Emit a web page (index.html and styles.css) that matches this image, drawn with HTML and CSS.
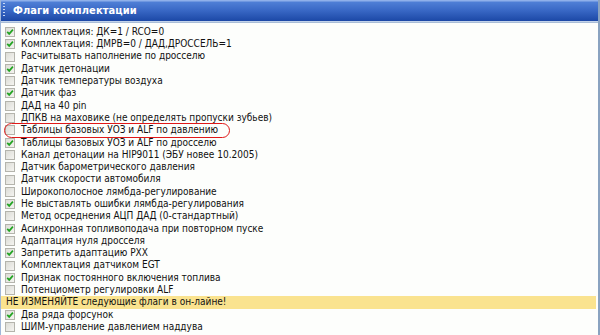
FILE: index.html
```html
<!DOCTYPE html>
<html lang="ru">
<head>
<meta charset="utf-8">
<link rel="stylesheet" href="styles.css">
</head>
<body>
<div class="panel">
  <div class="header">
    <span class="grip"></span>
    <span class="title">Флаги комплектации</span>
  </div>
  <div class="sep"></div>
  <ul class="list">
    <li class="row"><span class="cb on"><svg viewBox="0 0 8 8"><path d="M1.2 3.8 L3.2 5.9 L6.9 1.6"/></svg></span>Комплектация: ДК=1 / RCO=0</li>
    <li class="row"><span class="cb on"><svg viewBox="0 0 8 8"><path d="M1.2 3.8 L3.2 5.9 L6.9 1.6"/></svg></span>Комплектация: ДМРВ=0 / ДАД,ДРОССЕЛЬ=1</li>
    <li class="row"><span class="cb"></span>Расчитывать наполнение по дросселю</li>
    <li class="row"><span class="cb on"><svg viewBox="0 0 8 8"><path d="M1.2 3.8 L3.2 5.9 L6.9 1.6"/></svg></span>Датчик детонации</li>
    <li class="row"><span class="cb"></span>Датчик температуры воздуха</li>
    <li class="row"><span class="cb on"><svg viewBox="0 0 8 8"><path d="M1.2 3.8 L3.2 5.9 L6.9 1.6"/></svg></span>Датчик фаз</li>
    <li class="row"><span class="cb"></span>ДАД на 40 pin</li>
    <li class="row"><span class="cb"></span>ДПКВ на маховике (не определять пропуски зубьев)</li>
    <li class="row"><span class="cb"></span>Таблицы базовых УОЗ и ALF по давлению<span class="ring"></span></li>
    <li class="row"><span class="cb on"><svg viewBox="0 0 8 8"><path d="M1.2 3.8 L3.2 5.9 L6.9 1.6"/></svg></span>Таблицы базовых УОЗ и ALF по дросселю</li>
    <li class="row"><span class="cb"></span>Канал детонации на HIP9011 (ЭБУ новее 10.2005)</li>
    <li class="row"><span class="cb"></span>Датчик барометрического давления</li>
    <li class="row"><span class="cb"></span>Датчик скорости автомобиля</li>
    <li class="row"><span class="cb"></span>Широкополосное лямбда-регулирование</li>
    <li class="row"><span class="cb on"><svg viewBox="0 0 8 8"><path d="M1.2 3.8 L3.2 5.9 L6.9 1.6"/></svg></span>Не выставлять ошибки лямбда-регулирования</li>
    <li class="row"><span class="cb"></span>Метод осреднения АЦП ДАД (0-стандартный)</li>
    <li class="row"><span class="cb on"><svg viewBox="0 0 8 8"><path d="M1.2 3.8 L3.2 5.9 L6.9 1.6"/></svg></span>Асинхронная топливоподача при повторном пуске</li>
    <li class="row"><span class="cb"></span>Адаптация нуля дросселя</li>
    <li class="row"><span class="cb on"><svg viewBox="0 0 8 8"><path d="M1.2 3.8 L3.2 5.9 L6.9 1.6"/></svg></span>Запретить адаптацию РХХ</li>
    <li class="row"><span class="cb"></span>Комплектация датчиком EGT</li>
    <li class="row"><span class="cb on"><svg viewBox="0 0 8 8"><path d="M1.2 3.8 L3.2 5.9 L6.9 1.6"/></svg></span>Признак постоянного включения топлива</li>
    <li class="row"><span class="cb"></span>Потенциометр регулировки ALF</li>
    <li class="row warn">НЕ ИЗМЕНЯЙТЕ следующие флаги в он-лайне!</li>
    <li class="row"><span class="cb on"><svg viewBox="0 0 8 8"><path d="M1.2 3.8 L3.2 5.9 L6.9 1.6"/></svg></span>Два ряда форсунок</li>
    <li class="row"><span class="cb"></span>ШИМ-управление давлением наддува</li>
  </ul>
</div>
</body>
</html>
```
FILE: styles.css
```css
html, body {
  margin: 0;
  padding: 0;
  background: #fdfefc;
}
.panel {
  width: 600px;
  height: 335px;
  box-sizing: border-box;
  border-left: 1px solid #9fb6d8;
  border-right: 2px solid #8aa3c0;
  background: #fdfefc;
  font-family: "DejaVu Sans Condensed", "DejaVu Sans", sans-serif;
  font-size: 10px;
  color: #111;
  overflow: hidden;
}
.header {
  height: 21px;
  display: flex;
  align-items: center;
  background: linear-gradient(#8fb0ea 0, #8fb0ea 1px, #4f7fd6 2px, #3a69c6 10px, #1c48a6 21px);
  border-right: 1px solid #000;
  margin-right: -2px;
}
.grip {
  width: 2px;
  height: 15px;
  margin-left: 2px;
  background: repeating-linear-gradient(#c8d8f4 0, #c8d8f4 1px, transparent 1px, transparent 3px);
}
.title {
  margin-left: 8px;
  color: #fff;
  font-weight: bold;
  font-size: 11px;
  letter-spacing: 0.1px;
  font-family: "DejaVu Sans Condensed", "DejaVu Sans", sans-serif;
}
.sep {
  height: 2px;
  background: linear-gradient(#c3d3ea 0, #c3d3ea 1px, #a9bdd7 1px);
}
.list {
  list-style: none;
  margin: 0;
  padding: 2.85px 0 0 0;
}
.row {
  position: relative;
  height: 12.3px;
  line-height: 12.3px;
  display: flex;
  align-items: center;
  white-space: nowrap;
  padding-left: 4px;
}
.cb {
  width: 10px;
  height: 10px;
  box-sizing: border-box;
  border: 1px solid #b4b4ac;
  background: linear-gradient(135deg, #dcdcd6, #f4f4f0);
  margin-right: 6px;
  flex: none;
  display: flex;
}
.cb svg {
  width: 8px;
  height: 8px;
}
.cb svg path {
  fill: none;
  stroke: #22a422;
  stroke-width: 1.7;
}
.warn {
  background: #fae38f;
  padding-left: 5px;
  margin-right: 2px;
}
.ring {
  position: absolute;
  left: 3px;
  top: -1.3px;
  width: 226px;
  height: 15px;
  box-sizing: border-box;
  border: 1px solid #e01818;
  border-radius: 8px;
}
```
